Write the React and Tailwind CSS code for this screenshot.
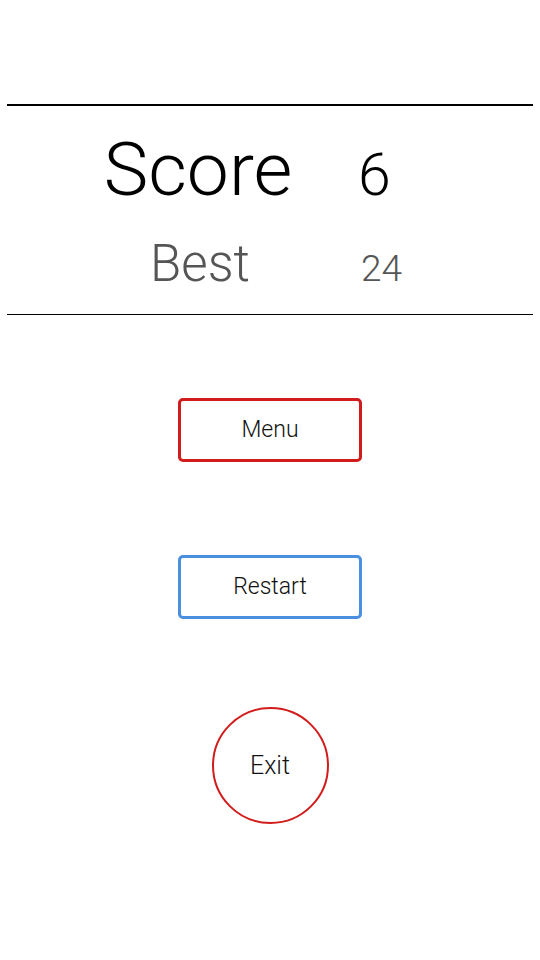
import React from 'react';

const GameOver = () => {
  const score = 6;
  const best = 24;

  return (
    <div className="min-h-screen bg-white font-['Roboto',sans-serif] font-light text-black">
      <div className="pt-[104px] px-[7px]">
        <div className="border-t-2 border-black" />
      </div>

      <div className="flex items-baseline mt-[26px]">
        <div className="w-[240px] ml-[78px] text-center text-[75px] leading-none">Score</div>
        <div className="ml-[40px] text-[59px] leading-none">{score}</div>
      </div>

      <div className="flex items-baseline mt-[31px] text-[#555]">
        <div className="w-[240px] ml-[80px] text-center text-[51px] leading-none">Best</div>
        <div className="ml-[41px] text-[37px] leading-none">{best}</div>
      </div>

      <div className="mt-[25px] px-[7px]">
        <div className="border-t border-black" />
      </div>

      <div className="flex flex-col items-center">
        <button className="mt-[83px] w-[184px] h-[64px] border-[3px] border-[#d21b1b] rounded-[5px] text-[23px] font-light text-[#111]">
          Menu
        </button>
        <button className="mt-[93px] w-[184px] h-[64px] border-[3px] border-[#4a8fe0] rounded-[5px] text-[23px] font-light text-[#111]">
          Restart
        </button>
        <button className="mt-[88px] w-[117px] h-[117px] border-[2.5px] border-[#d21b1b] rounded-full text-[25px] font-light text-[#111]">
          Exit
        </button>
      </div>
    </div>
  );
};

export default GameOver;
